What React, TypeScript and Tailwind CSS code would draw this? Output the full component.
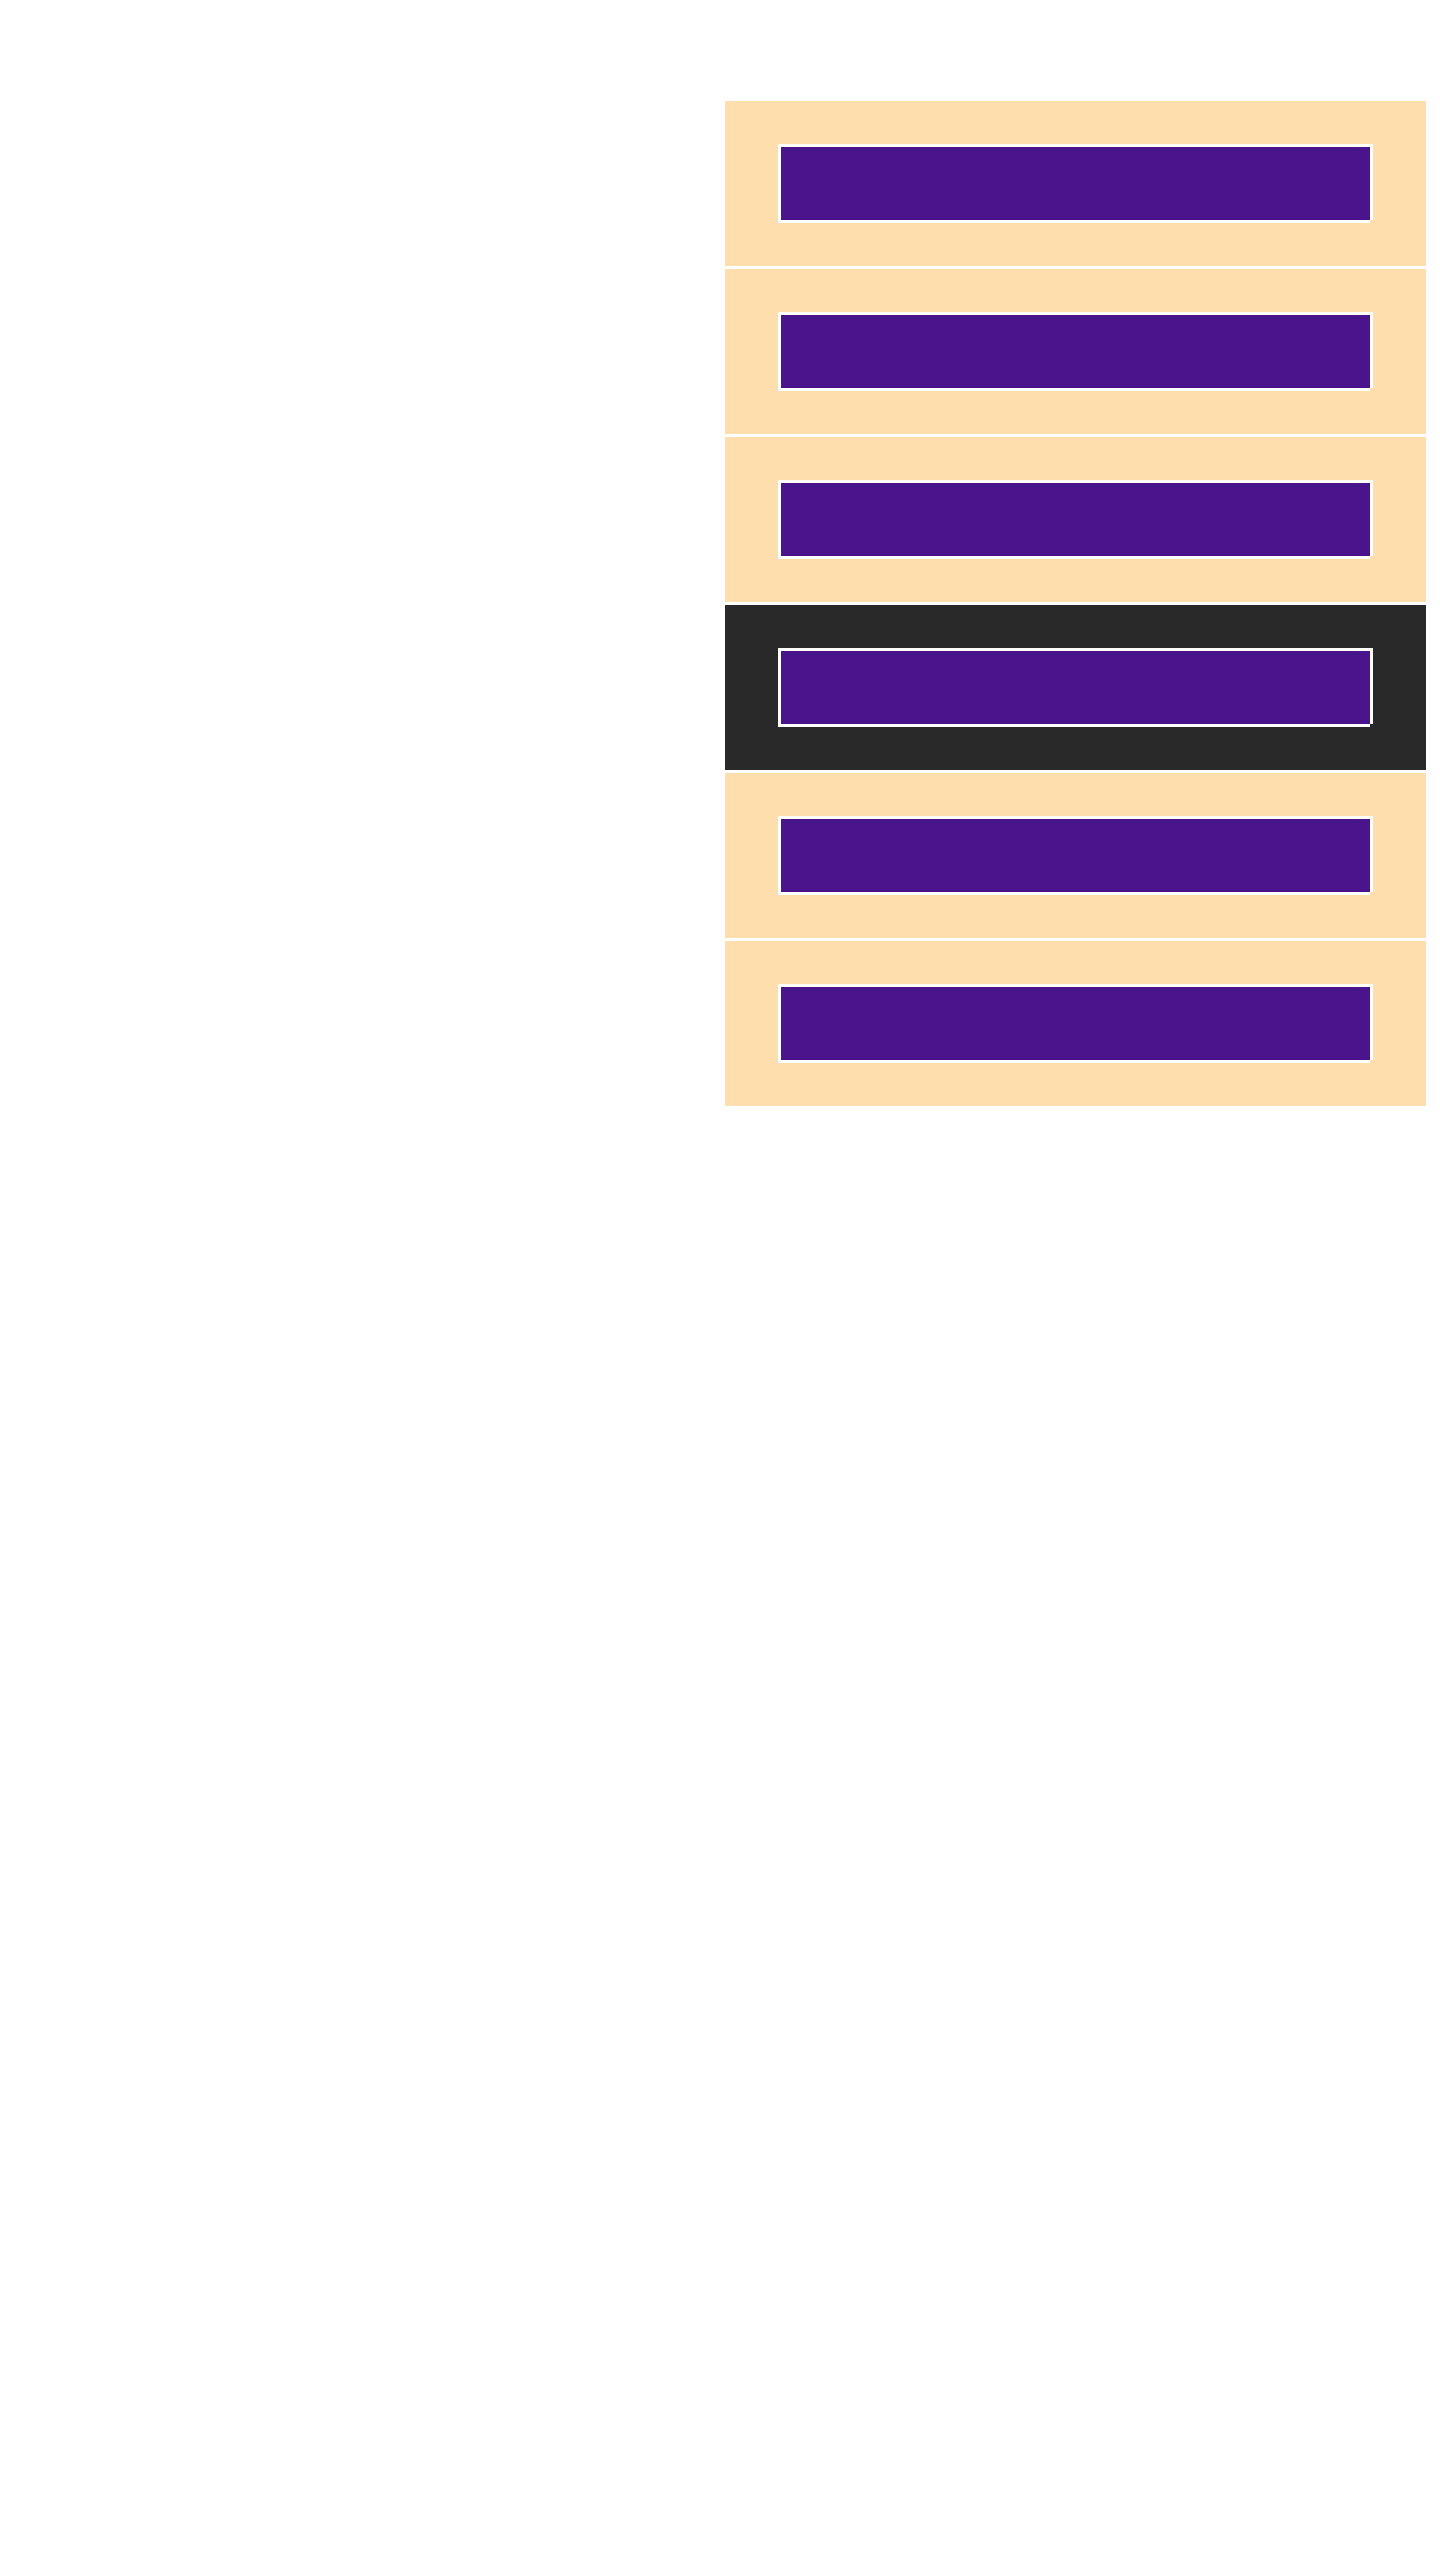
const rows = [false, false, false, true, false, false];

function Row({ active }: { active: boolean }) {
  return (
    <div
      className={`px-[53px] py-[43px] ${
        active ? "bg-[#292929]" : "bg-[#ffdead]"
      }`}
    >
      <div className="mb-[3px] mr-[3px] h-[76px] border-l-[3px] border-t-[3px] border-white bg-[#4a148c] shadow-[3px_0_0_#ffffff,0_3px_0_#ffffff]" />
    </div>
  );
}

export default function App() {
  return (
    <div className="min-h-[2560px] w-full bg-white font-['Liberation_Sans',sans-serif]">
      <div className="flex justify-end pr-[14px] pt-[101px]">
        <div className="flex w-[701px] flex-col gap-[3px]">
          {rows.map((active, index) => (
            <Row key={index} active={active} />
          ))}
        </div>
      </div>
    </div>
  );
}
